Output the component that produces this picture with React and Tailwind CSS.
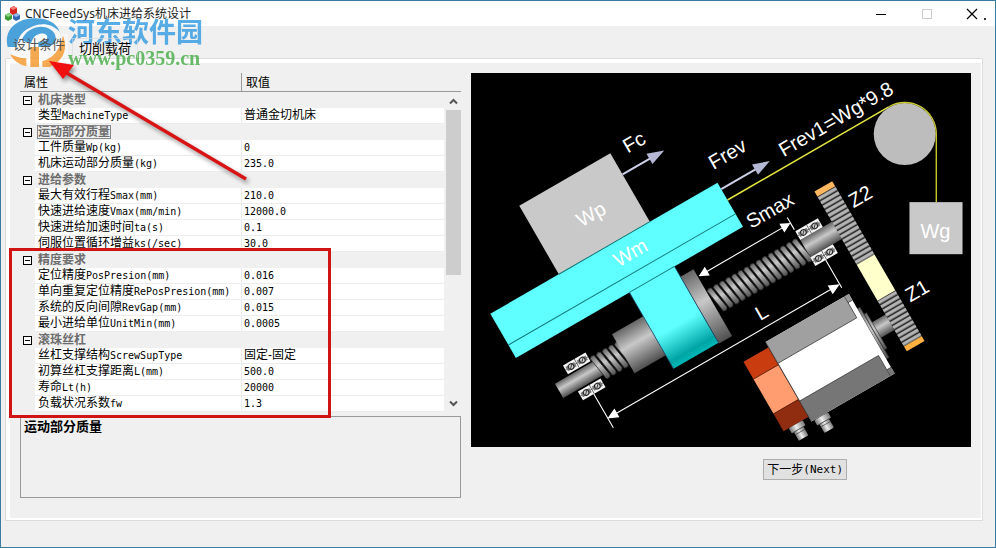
import React, { useState } from "react";

const groups = [
  { title: "机床类型", rows: [["类型", "MachineType", "普通金切机床"]] },
  {
    title: "运动部分质量",
    rows: [
      ["工件质量", "Wp(kg)", "0"],
      ["机床运动部分质量", "(kg)", "235.0"],
    ],
  },
  {
    title: "进给参数",
    rows: [
      ["最大有效行程", "Smax(mm)", "210.0"],
      ["快速进给速度", "Vmax(mm/min)", "12000.0"],
      ["快速进给加速时间", "ta(s)", "0.1"],
      ["伺服位置循环增益", "ks(/sec)", "30.0"],
    ],
  },
  {
    title: "精度要求",
    rows: [
      ["定位精度", "PosPresion(mm)", "0.016"],
      ["单向重复定位精度", "RePosPresion(mm)", "0.007"],
      ["系统的反向间隙", "RevGap(mm)", "0.015"],
      ["最小进给单位", "UnitMin(mm)", "0.0005"],
    ],
  },
  {
    title: "滚珠丝杠",
    rows: [
      ["丝杠支撑结构", "ScrewSupType", "固定-固定"],
      ["初算丝杠支撑距离", "L(mm)", "500.0"],
      ["寿命", "Lt(h)", "20000"],
      ["负载状况系数", "fw", "1.3"],
    ],
  },
];

const isLatin = (s) => /^[\x20-\x7e]+$/.test(s);

function AppIcon() {
  return (
    <svg viewBox="0 0 16 16" className="h-4 w-4 shrink-0">
      <path d="M5 2 L9 0 L12 2 V7 L8 9 L5 7Z" fill="#d8261c" />
      <path d="M5 2 L9 0 L12 2 L8 4Z" fill="#f08078" />
      <path d="M0 9 L4 7 L7 9 V13 L3 15 L0 13Z" fill="#3d9a35" />
      <path d="M0 9 L4 7 L7 9 L3 11Z" fill="#90d488" />
      <path d="M8 9 L12 7 L15 9 V13 L11 15 L8 13Z" fill="#3368b4" />
      <path d="M8 9 L12 7 L15 9 L11 11Z" fill="#93b8e8" />
    </svg>
  );
}

function TitleBar() {
  return (
    <header className="flex h-[25px] items-center justify-between bg-white pl-1">
      <div className="flex items-center gap-1">
        <AppIcon />
        <h1 className="font-['Noto_Sans','Noto_Sans_CJK_SC',sans-serif] text-xs text-[#222]">
          CNCFeedSys机床进给系统设计
        </h1>
      </div>
      <div className="flex h-full items-center">
        <button aria-label="Minimize" className="flex w-[46px] justify-center">
          <svg viewBox="0 0 12 12" className="h-3 w-3">
            <path d="M1 6.5H11" stroke="#000" />
          </svg>
        </button>
        <button aria-label="Maximize" className="flex w-[45px] justify-center">
          <svg viewBox="0 0 12 12" className="h-3 w-3">
            <rect x="1.5" y="1.5" width="9" height="9" fill="none" stroke="#ccc" />
          </svg>
        </button>
        <button aria-label="Close" className="flex w-[46px] justify-center">
          <svg viewBox="0 0 30 12" className="h-3 w-[30px]">
            <path d="M10 1L20 11M20 1L10 11" stroke="#000" strokeWidth="1.2" />
            <rect x="27" y="10" width="2" height="2" fill="#333" />
          </svg>
        </button>
      </div>
    </header>
  );
}

function PropertyGrid({ selected, onSelect }) {
  const [closed, setClosed] = useState({});
  const toggle = (title) => {
    onSelect(title);
    setClosed({ ...closed, [title]: !closed[title] });
  };

  return (
    <div className="flex">
      <table className="grow table-fixed border-separate border-spacing-0 text-left text-xs">
        <colgroup>
          <col className="w-[15px]" />
          <col className="w-[207px]" />
          <col />
        </colgroup>
        <thead>
          <tr className="leading-4">
            <th
              colSpan={2}
              className="border-r border-b border-[#999] p-0 pt-[2px] pl-1 font-normal"
            >
              属性
            </th>
            <th className="border-b border-[#999] p-0 pt-[2px] pl-1 font-normal">取值</th>
          </tr>
        </thead>
        {groups.map((group) => (
          <tbody key={group.title}>
            <tr className="leading-4 text-[#6d6d6d]">
              <td className="h-4 p-0">
                <button
                  aria-label={`Toggle ${group.title}`}
                  onClick={() => toggle(group.title)}
                  className="ml-[3px] block"
                >
                  <svg viewBox="0 0 9 9" className="h-[9px] w-[9px]">
                    <rect x=".5" y=".5" width="8" height="8" fill="#fff" stroke="#000" />
                    <path d={closed[group.title] ? "M2 4.5H7M4.5 2V7" : "M2 4.5H7"} stroke="#000" />
                  </svg>
                </button>
              </td>
              <th colSpan={2} scope="rowgroup" className="h-4 p-0 pl-[2px] font-bold">
                <span
                  className={`block w-fit px-px leading-[14px] outline-1 -outline-offset-1 ${
                    selected === group.title ? "outline-[#888]" : "outline-transparent"
                  }`}
                >
                  {group.title}
                </span>
              </th>
            </tr>
            {!closed[group.title] &&
              group.rows.map(([name, symbol, value]) => (
                <tr key={name} className="leading-[15px] whitespace-nowrap">
                  <td className="p-0"></td>
                  <td className="border-r border-b border-[#ececec] bg-white p-0 pl-[3px]">
                    <div className="flex h-[15px] items-center">
                      {name}
                      <span className="font-['DejaVu_Sans_Mono',monospace] text-[10px]">
                        {symbol}
                      </span>
                    </div>
                  </td>
                  <td className="border-b border-[#ececec] bg-white p-0 pl-[2px]">
                    <div
                      className={`flex h-[15px] items-center ${
                        isLatin(value)
                          ? "font-['DejaVu_Sans_Mono',monospace] text-[10px]"
                          : ""
                      }`}
                    >
                      {value}
                    </div>
                  </td>
                </tr>
              ))}
          </tbody>
        ))}
      </table>

      {/* Scrollbar */}
      <div className="flex w-[17px] flex-col">
        <div className="h-[19px] border-b border-[#999]" />
        <div className="ml-[2px] flex grow flex-col">
          <button aria-label="Scroll up" className="flex h-[18px] items-center justify-center">
            <svg viewBox="0 0 9 7" className="h-[7px] w-[9px]">
              <path d="M1 5.5L4.5 2L8 5.5" fill="none" stroke="#555" strokeWidth="2" />
            </svg>
          </button>
          <div className="grow">
            <div className="h-[58%] bg-[#cdcdcd]" />
          </div>
          <button aria-label="Scroll down" className="flex h-[18px] items-center justify-center">
            <svg viewBox="0 0 9 7" className="h-[7px] w-[9px]">
              <path d="M1 1.5L4.5 5L8 1.5" fill="none" stroke="#555" strokeWidth="2" />
            </svg>
          </button>
        </div>
      </div>
    </div>
  );
}

function Thread({ from, count }) {
  return Array.from({ length: count }, (_, i) => (
    <path
      key={i}
      d={`M${from + i * 7} -12 q2 -3 5 -1 l4 24 q-1 4 -5 2 Z`}
      fill="url(#steel)"
      stroke="#333"
      strokeWidth=".8"
    />
  ));
}

function Bearing({ x, y }) {
  return (
    <g transform={`translate(${x} ${y})`}>
      <rect width="26" height="10" fill="#f4f4f4" />
      <path d="M0 5H26M13 0V10" stroke="#555" strokeWidth=".8" />
      {[6.5, 19.5].map((cx) => (
        <g key={cx}>
          <rect x={cx - 5} y="2.5" width="10" height="5" fill="#777" />
          <circle cx={cx} cy="5" r="2.8" fill="#ccc" stroke="#222" />
          <path d={`M${cx - 2} 7L${cx + 2} 3`} stroke="#444" />
        </g>
      ))}
    </g>
  );
}

function Teeth({ from, to }) {
  const n = Math.round((to - from) / 4.8);
  const h = (to - from) / n;
  return Array.from({ length: n }, (_, i) => (
    <g key={i}>
      <rect x="320.5" y={from + i * h} width="20.5" height={h} fill="#777" />
      <rect x="320.5" y={from + i * h + 1} width="20.5" height={h - 2.4} fill="#b4b4b4" />
      <path d={`M320.5 ${from + i * h}h20.5`} stroke="#222" strokeWidth=".9" />
    </g>
  ));
}

function Plug({ x, y }) {
  return (
    <g>
      <rect x={x - 8} y={y} width="16" height="6" rx="1" fill="url(#steelAcross)" />
      <rect x={x - 5.5} y={y + 6} width="11" height="10" rx="1" fill="url(#steelAcross)" />
      <path d={`M${x - 7} ${y + 6}h14M${x - 5} ${y + 9}h10`} stroke="#444" strokeWidth=".7" />
    </g>
  );
}

function FeedDiagram() {
  return (
    <svg
      viewBox="471 73 499 374"
      role="img"
      aria-label="Feed system diagram"
      className="block w-full bg-black font-['Liberation_Sans',sans-serif]"
    >
      <defs>
        <linearGradient id="steel" x1="0" y1="0" x2="0" y2="1">
          <stop offset="0" stopColor="#666" />
          <stop offset=".42" stopColor="#c8c8c8" />
          <stop offset="1" stopColor="#505050" />
        </linearGradient>
        <linearGradient id="steelAcross" x1="0" y1="0" x2="1" y2="0">
          <stop offset="0" stopColor="#777" />
          <stop offset=".45" stopColor="#eee" />
          <stop offset="1" stopColor="#777" />
        </linearGradient>
        <linearGradient id="bracket" x1="0" y1="0" x2="0" y2="1">
          <stop offset=".6" stopColor="#5fffff" />
          <stop offset=".92" stopColor="#00a4a4" />
          <stop offset="1" stopColor="#00b8b8" />
        </linearGradient>
      </defs>

      {/* everything on the machine axis is inclined by 30 degrees */}
      <g transform="translate(559 390.5) rotate(-30)">
        {/* screw */}
        <rect x="0" y="-8.3" width="46" height="16.6" fill="url(#steel)" />
        <Bearing x={16} y={-20} />
        <Bearing x={16} y={10} />
        <Thread from={43} count={5} />
        <rect x="284" y="-10" width="37" height="20" fill="url(#steel)" />
        <Thread from={178} count={15} />
        <Bearing x={284} y={-20} />
        <Bearing x={284} y={10} />
        <rect x="74" y="-22.5" width="37" height="45" fill="url(#steel)" />
        <rect x="162" y="-38" width="15" height="77" fill="url(#steel)" />
        <rect x="110" y="-52" width="52" height="90" fill="url(#bracket)" />
        <path d="M110 -50V38M162 -50V38" stroke="#246" strokeWidth=".8" />

        {/* table and workpiece */}
        <rect x="58" y="-180" width="105" height="79" fill="#c9c9c9" />
        <rect x="-21" y="-101" width="262" height="51" fill="#5fffff" />
        <path d="M-21 -65H241M58 -101H163M110 -50H162" stroke="#177" strokeWidth=".9" />

        {/* forces */}
        <g stroke="#ccd0e8" strokeWidth="2">
          <path d="M163 -155.5H196M241 -93.5H282" />
        </g>
        <path d="M211 -155.5L194 -161.5V-149.5ZM297 -93.5L280 -99.5V-87.5Z" fill="#b4b8d4" />
        <path d="M241 -81H427" stroke="#e6e640" strokeWidth="1.5" />

        {/* gear train */}
        <Teeth from={-39} to={39.5} />
        <Teeth from={81} to={134} />
        <rect x="320.5" y="-45" width="20.5" height="6" fill="#ffb860" />
        <rect x="320.5" y="39.5" width="20.5" height="41.5" fill="#ffffcc" />
        <rect x="320.5" y="134" width="20.5" height="5.5" fill="#ffb040" />

        {/* motor */}
        <rect x="303" y="97" width="17.5" height="18" fill="url(#steel)" />
        <rect x="299" y="78" width="3" height="58" fill="url(#steel)" stroke="#333" strokeWidth=".6" />
        <rect x="302" y="86" width="3" height="41" fill="url(#steel)" stroke="#333" strokeWidth=".6" />
        <rect x="203" y="61" width="96" height="91.5" fill="#fff" />
        <rect x="203" y="61" width="91" height="24.5" fill="#a0a0a0" />
        <rect x="203" y="129" width="91" height="23.5" fill="#767676" />
        <rect x="294" y="61" width="5" height="7" fill="#999" />
        <rect x="294" y="145.5" width="5" height="7" fill="#777" />
        <path
          d="M203 61V152.5M203 85.5H294V61M203 129H294V152.5M294 68H299M294 145.5H299"
          fill="none"
          stroke="#444"
          strokeWidth=".8"
        />
        <rect x="174" y="67" width="28.5" height="20" fill="#c83c10" />
        <rect x="174" y="87" width="28.5" height="40" fill="#ff9c70" />
        <rect x="174" y="127" width="28.5" height="20" fill="#902c10" />
        <path d="M174 87H202.5M174 127H202.5" stroke="#5a1c08" strokeWidth=".7" />
        <Plug x={188} y={147} />
        <Plug x={214} y={153} />

        {/* dimensions */}
        <path
          d="M32 48H292M28.5 20V59M296 20V52M182 -29.5H280M284 -36V-22"
          stroke="#fff"
          strokeWidth="1.1"
        />
        <path
          d="M28 48L39 43V53ZM296 48L285 43V53ZM178 -29.5L188 -34.5V-24.5ZM284 -29.5L274 -34.5V-24.5Z"
          fill="#fff"
        />

        <g fill="#fff" fontSize="20">
          <text x="178" y="-171">Fc</text>
          <text x="244" y="-114">Frev</text>
          <text x="311" y="-90">Frev1=Wg*9.8</text>
          <text x="101" y="-130">Wp</text>
          <text x="113" y="-77">Wm</text>
          <text x="247" y="-44">Smax</text>
          <text x="209" y="40">L</text>
          <text x="346" y="-11">Z2</text>
          <text x="348" y="99">Z1</text>
        </g>
      </g>

      {/* pulley and counterweight */}
      <circle cx="904.3" cy="134" r="31" fill="#bdbdbd" />
      <path
        d="M888.5 106.7A31.5 31.5 0 0 1 935.8 134V202"
        fill="none"
        stroke="#c8c832"
        strokeWidth="1.4"
      />
      <rect x="909" y="202" width="53" height="52" fill="#c9c9c9" />
      <text x="920" y="238" fontSize="20" fill="#fff">Wg</text>
    </svg>
  );
}

function SiteBadge() {
  return (
    <div className="pointer-events-none absolute top-[13px] left-0 flex opacity-85">
      <svg viewBox="0 39 201 165" className="h-[55px] w-[67px] shrink-0">
        <path d="M30 100H201V190H30Z" fill="#fff" fillOpacity=".5" />
        <circle cx="108" cy="125" r="74" fill="#fff" fillOpacity=".5" />
        <path
          d="M20 138C6 84 52 50 104 52C140 52 166 66 176 92C154 68 122 64 96 76C64 88 50 108 48 138Z"
          fill="#2f94d6"
        />
        <path
          d="M62 118C72 86 116 66 146 84C172 98 170 132 140 138H112V122H122C142 120 144 102 130 98C112 94 96 104 90 128Z"
          fill="#2f94d6"
        />
        <path d="M88 138H114V198H88Z" fill="#f59c35" />
        <path
          d="M186 104C202 140 188 182 146 198H124V180C154 174 176 148 186 104Z"
          fill="#f59c35"
        />
        <path d="M28 160C36 178 54 190 76 196V172C58 172 42 166 28 160Z" fill="#f59c35" />
      </svg>
      <div className="font-bold whitespace-nowrap">
        <div className="font-['Noto_Sans_CJK_SC',sans-serif] text-[27px] leading-[34px] text-[#3d9fe2]">
          河东软件园
        </div>
        <div className="font-['Liberation_Serif',serif] text-[20px] leading-5 text-[#4fb04f]">
          www.pc0359.cn
        </div>
      </div>
    </div>
  );
}

function RedArrow() {
  return (
    <svg
      viewBox="0 0 210 130"
      className="pointer-events-none absolute top-[56px] left-[44px] h-[130px] w-[210px] drop-shadow-[2px_3px_2px_rgba(0,0,0,0.4)]"
    >
      <path d="M20 15L201 122" stroke="#d81414" strokeWidth="3.5" />
      <path d="M4 4L29 8L18 22Z" fill="#f01010" />
    </svg>
  );
}

export default function App() {
  const [tab, setTab] = useState("设计条件");
  const [selected, setSelected] = useState("运动部分质量");

  return (
    <div className="relative flex min-h-screen flex-col border border-[#3a7ca3] bg-[#f0f0f0] font-['Liberation_Sans','Noto_Sans_CJK_SC',sans-serif] text-black">
      <TitleBar />
      <SiteBadge />

      {/* the tabs lie over the badge */}
      <div
        role="tablist"
        className="relative flex h-8 items-end pl-[5px] text-[13px] leading-[18px]"
      >
        <button
          role="tab"
          aria-selected={tab === "设计条件"}
          onClick={() => setTab("设计条件")}
          className="h-[22px] px-[7px] pb-1 text-[#555]"
        >
          设计条件
        </button>
        <button
          role="tab"
          aria-selected={tab === "切削载荷"}
          onClick={() => setTab("切削载荷")}
          className="h-5 border border-b-0 border-[#d9d9d9]/60 px-[6px]"
        >
          切削载荷
        </button>
      </div>

      <main className="mr-3 mb-[26px] ml-1 flex grow border border-[#dcdcdc]">
        <div className="grid grow grid-cols-[441fr_499fr] gap-[10px] border-t-4 border-r border-b-2 border-l-4 border-white px-[10px] pt-[10px]">
          <section>
            <div className="relative">
              <PropertyGrid selected={selected} onSelect={setSelected} />
              <div className="pointer-events-none absolute top-[175px] right-[130px] -bottom-[6px] -left-[11px] border-3 border-[#d01414]" />
            </div>
            <div className="mt-1 h-[82px] border border-[#999] px-[3px] text-[13px] leading-5 font-bold">
              {selected}
            </div>
          </section>

          <section>
            <FeedDiagram />
            <div className="mt-3 flex justify-center">
              <button className="ml-[168px] flex h-[21px] items-center border border-[#adadad] bg-[#e1e1e1] px-[3px] text-xs">
                下一步
                <span className="font-['DejaVu_Sans_Mono',monospace] text-[11px]">(Next)</span>
              </button>
            </div>
          </section>
        </div>
      </main>

      <RedArrow />
    </div>
  );
}
